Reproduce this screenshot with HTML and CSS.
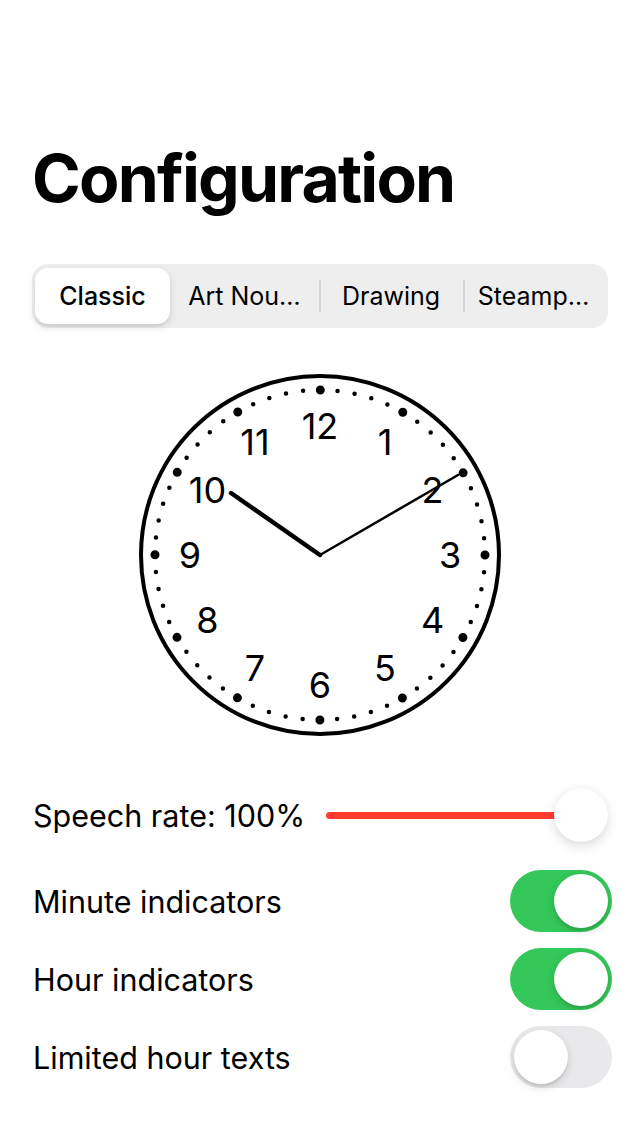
FILE: index.html
```html
<!DOCTYPE html>
<html lang="en">
<head>
<meta charset="utf-8">
<title>Configuration</title>
<link rel="stylesheet" href="styles.css">
</head>
<body>
<main class="page">
  <h1 class="title">Configuration</h1>

  <div class="segmented">
    <div class="seg seg-selected">Classic</div>
    <div class="seg">Art Nou…</div>
    <div class="seg seg-divider">Drawing</div>
    <div class="seg seg-divider">Steamp…</div>
  </div>

  <div class="clock-wrap">
    <svg class="clock" width="370" height="370" viewBox="-185 -185 370 370">
      <circle r="179" fill="#fff" stroke="#000" stroke-width="4"/>
      <circle r="165" fill="none" stroke="#000" stroke-width="4.5" stroke-linecap="round" stroke-dasharray="0 17.2788"/>
      <circle r="165" fill="none" stroke="#000" stroke-width="9" stroke-linecap="round" stroke-dasharray="0 86.3938"/>
      <g class="numbers" text-anchor="middle" dominant-baseline="central">
        <text x="0" y="-129">12</text>
        <text x="65" y="-112.6">1</text>
        <text x="112.6" y="-65">2</text>
        <text x="130" y="0">3</text>
        <text x="112.6" y="65">4</text>
        <text x="65" y="112.6">5</text>
        <text x="0" y="130">6</text>
        <text x="-65" y="112.6">7</text>
        <text x="-112.6" y="65">8</text>
        <text x="-130" y="0">9</text>
        <text x="-112.6" y="-65">10</text>
        <text x="-65" y="-112.6">11</text>
      </g>
      <line x1="0" y1="0" x2="-89" y2="-62" stroke="#000" stroke-width="4.5" stroke-linecap="round"/>
      <line x1="0" y1="0" x2="138" y2="-80" stroke="#000" stroke-width="2.5" stroke-linecap="round"/>
    </svg>
  </div>

  <div class="row slider-row">
    <span class="label">Speech rate: 100%</span>
    <div class="slider">
      <div class="track"></div>
      <div class="thumb"></div>
    </div>
  </div>

  <div class="row">
    <span class="label">Minute indicators</span>
    <div class="toggle toggle-on"><div class="knob"></div></div>
  </div>
  <div class="row">
    <span class="label">Hour indicators</span>
    <div class="toggle toggle-on"><div class="knob"></div></div>
  </div>
  <div class="row">
    <span class="label">Limited hour texts</span>
    <div class="toggle"><div class="knob"></div></div>
  </div>
</main>
</body>
</html>
```

FILE: styles.css
```css
* { box-sizing: border-box; }

html, body {
  margin: 0;
  padding: 0;
  background: #fff;
}

body {
  font-family: Inter, "Noto Sans", "Liberation Sans", sans-serif;
  color: #000;
  width: 640px;
  height: 1136px;
  overflow: hidden;
}

.page {
  padding: 138px 32px 0 32px;
  display: flex;
  flex-direction: column;
}

.title {
  margin: 0;
  font-size: 66px;
  line-height: 80px;
  font-weight: 700;
  letter-spacing: -1.8px;
}

.segmented {
  margin-top: 46px;
  height: 64px;
  padding: 3px 4px 4px 3px;
  background: #eeeeef;
  border-radius: 16px;
  display: grid;
  grid-template-columns: 135px 149px 144px 1fr;
  align-items: center;
}

.seg {
  position: relative;
  height: 56px;
  display: flex;
  align-items: center;
  justify-content: center;
  font-size: 25px;
  font-weight: 400;
  white-space: nowrap;
}

.seg-selected {
  background: #fff;
  border-radius: 13px;
  font-weight: 500;
  box-shadow: 0 3px 8px rgba(0,0,0,0.12), 0 3px 1px rgba(0,0,0,0.04);
}

.seg-divider::before {
  content: "";
  position: absolute;
  left: 0;
  top: 12px;
  bottom: 12px;
  width: 1.5px;
  background: #d4d4d8;
}

.clock-wrap {
  margin-top: 42px;
  display: flex;
  justify-content: center;
}

.clock {
  display: block;
}

.numbers text {
  font-family: Inter, "Noto Sans", sans-serif;
  font-size: 36px;
  font-weight: 400;
  fill: #000;
}

.row {
  display: flex;
  align-items: center;
  justify-content: space-between;
  height: 78px;
}

.slider-row {
  margin-top: 39px;
  height: 72px;
  margin-bottom: 11px;
}

.label {
  font-size: 30.5px;
  font-weight: 400;
  padding-left: 1px;
  white-space: nowrap;
}

.slider {
  flex: 0 0 282px;
  height: 56px;
  display: flex;
  align-items: center;
}

.track {
  flex: 1;
  height: 7px;
  margin-right: -27px;
  background: #ff3b30;
  border-radius: 4px;
}

.thumb {
  position: relative;
  width: 54px;
  height: 54px;
  border-radius: 50%;
  background: #fff;
  box-shadow: 0 4px 12px rgba(0,0,0,0.14), 0 0 1px rgba(0,0,0,0.08);
}

.toggle {
  width: 102px;
  height: 62px;
  border-radius: 31px;
  background: #e9e9eb;
  padding: 4px;
  display: flex;
  justify-content: flex-start;
  margin-right: -4px;
}

.toggle-on {
  background: #34c759;
  justify-content: flex-end;
}

.knob {
  width: 54px;
  height: 54px;
  border-radius: 50%;
  background: #fff;
  box-shadow: 0 3px 8px rgba(0,0,0,0.15), 0 3px 1px rgba(0,0,0,0.06);
}
```
